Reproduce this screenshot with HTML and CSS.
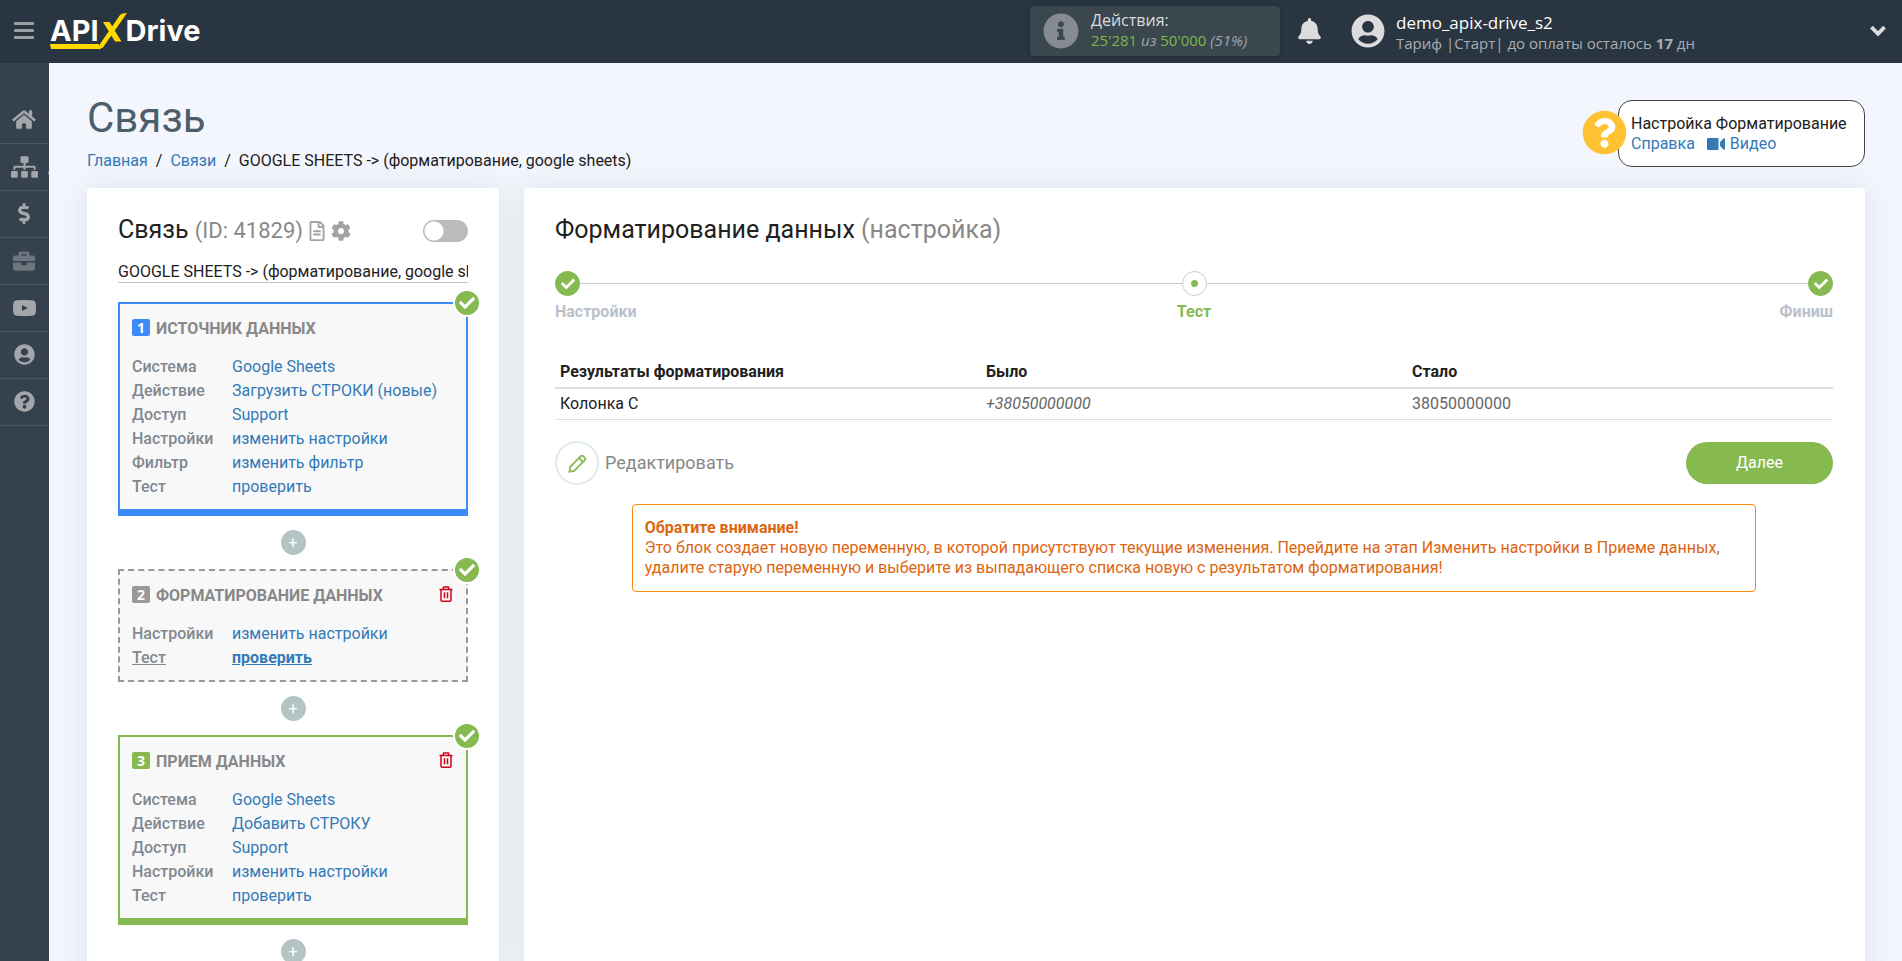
FILE: index.html
```html
<!DOCTYPE html>
<html lang="ru">
<head>
<meta charset="utf-8">
<title>APIXDrive – Связь</title>
<link rel="stylesheet" href="styles.css">
</head>
<body>
<svg class="sprite" aria-hidden="true">
  <symbol id="i-check" viewBox="0 0 512 512"><path d="M173.898 439.404l-166.4-166.4c-9.997-9.997-9.997-26.206 0-36.204l36.203-36.204c9.997-9.998 26.207-9.998 36.204 0L192 312.69 432.095 72.596c9.997-9.997 26.207-9.997 36.204 0l36.203 36.204c9.997 9.997 9.997 26.206 0 36.204l-294.4 294.401c-9.998 9.997-26.207 9.997-36.204-.001z"/></symbol>
  <symbol id="i-user" viewBox="0 0 496 512"><path d="M248 8C111 8 0 119 0 256s111 248 248 248 248-111 248-248S385 8 248 8zm0 96c48.6 0 88 39.4 88 88s-39.4 88-88 88-88-39.4-88-88 39.4-88 88-88zm0 344c-58.7 0-111.3-26.6-146.5-68.2 18.8-35.4 55.6-59.8 98.5-59.8 2.4 0 4.8.4 7.1 1.1 13 4.2 26.6 6.9 40.9 6.9 14.3 0 28-2.7 40.9-6.9 2.3-.7 4.7-1.1 7.1-1.1 42.9 0 79.7 24.4 98.5 59.8C359.3 421.4 306.7 448 248 448z"/></symbol>
  <symbol id="i-question" viewBox="0 0 512 512"><path d="M504 256c0 136.997-111.043 248-248 248S8 392.997 8 256C8 119.083 119.043 8 256 8s248 111.083 248 248zM262.655 90c-54.497 0-89.255 22.957-116.549 63.758-3.536 5.286-2.353 12.415 2.715 16.258l34.699 26.31c5.205 3.947 12.621 3.008 16.665-2.122 17.864-22.658 30.113-35.797 57.303-35.797 20.429 0 45.698 13.148 45.698 32.958 0 14.976-12.363 22.667-32.534 33.976C247.128 238.528 216 254.941 216 296v4c0 6.627 5.373 12 12 12h56c6.627 0 12-5.373 12-12v-1.333c0-28.462 83.186-29.647 83.186-106.667 0-58.002-60.165-102-116.531-102zM256 338c-25.365 0-46 20.635-46 46 0 25.364 20.635 46 46 46s46-20.636 46-46c0-25.365-20.635-46-46-46z"/></symbol>
  <symbol id="i-trash" viewBox="0 0 14 16"><path d="M0.500 3.500h13M4 3.500l.6-2.500h4.800l.6 2.500M2 3.500v10.500a1.200 1.200 0 0 0 1.200 1.200h7.600a1.200 1.200 0 0 0 1.200-1.200V3.500M5.500 6.200v6M8.500 6.200v6" fill="none" stroke="currentColor" stroke-width="1.500"/></symbol>
</svg>

<header class="topbar">
  <button class="burger" type="button" aria-label="Меню"><span></span><span></span><span></span></button>
  <a class="logo" href="#" aria-label="APIXDrive">
    <span>API</span>
    <svg class="logo-x" viewBox="0 0 28 36" aria-hidden="true"><path d="M4 9h6.500L22.500 28.500H16zM21 2Q23 0 28 0L4 34.500 1 35.500V31z"/></svg>
    <span>Drive</span>
    <svg class="logo-line" viewBox="0 0 51 5" aria-hidden="true"><path d="M0 0h49l2 5H1z"/></svg>
  </a>
  <div class="actions">
    <svg class="ic-info" viewBox="0 0 512 512" aria-hidden="true"><path d="M256 8C119.043 8 8 119.083 8 256c0 136.997 111.043 248 248 248s248-111.003 248-248C504 119.083 392.957 8 256 8zm0 110c23.196 0 42 18.804 42 42s-18.804 42-42 42-42-18.804-42-42 18.804-42 42-42zm56 254c0 6.627-5.373 12-12 12h-88c-6.627 0-12-5.373-12-12v-24c0-6.627 5.373-12 12-12h12v-64h-12c-6.627 0-12-5.373-12-12v-24c0-6.627 5.373-12 12-12h64c6.627 0 12 5.373 12 12v100h12c6.627 0 12 5.373 12 12v24z"/></svg>
    <div>
      <div class="actions-label">Действия:</div>
      <div class="actions-value"><b>25'281</b> <i>из</i> <b>50'000</b> <i>(51%)</i></div>
    </div>
  </div>
  <button class="bell" type="button" aria-label="Уведомления"><svg viewBox="0 0 448 512"><path d="M224 512c35.320 0 63.970-28.650 63.970-64H160.030c0 35.350 28.650 64 63.970 64zm215.390-149.710c-19.320-20.760-55.470-51.990-55.470-154.290 0-77.700-54.480-139.900-127.940-155.160V32c0-17.670-14.320-32-31.980-32s-31.980 14.330-31.980 32v20.840C118.560 68.100 64.080 130.300 64.080 208c0 102.300-36.150 133.530-55.470 154.290-6 6.450-8.660 14.160-8.610 21.710.11 16.400 12.980 32 32.100 32h383.800c19.120 0 32-15.600 32.100-32 .05-7.550-2.610-15.270-8.610-21.710z"/></svg></button>
  <div class="account">
    <svg class="ic-account" aria-hidden="true"><use href="#i-user"/></svg>
    <div>
      <div class="account-name">demo_apix-drive_s2</div>
      <div class="account-plan">Тариф |Старт| до оплаты осталось <b>17</b> дн</div>
    </div>
  </div>
  <button class="expand" type="button" aria-label="Развернуть"><svg viewBox="0 0 16 11"><path d="M2 2l6 6 6-6" fill="none" stroke="currentColor" stroke-width="3.500"/></svg></button>
</header>

<div class="shell">
  <nav class="rail" aria-label="Разделы">
    <a href="#" aria-label="Главная"><svg class="ic-24" viewBox="0 0 576 512"><path d="M280.370 148.260L96 300.110V464a16 16 0 0 0 16 16l112.060-.29a16 16 0 0 0 15.920-16V368a16 16 0 0 1 16-16h64a16 16 0 0 1 16 16v95.640a16 16 0 0 0 16 16.050L464 480a16 16 0 0 0 16-16V300L295.670 148.260a12.190 12.190 0 0 0-15.300 0zM571.600 251.470L488 182.560V44.050a12 12 0 0 0-12-12h-56a12 12 0 0 0-12 12v72.610L318.470 43a48 48 0 0 0-61 0L4.340 251.470a12 12 0 0 0-1.600 16.900l25.500 31A12 12 0 0 0 45.150 301l235.220-193.740a12.190 12.190 0 0 1 15.300 0L530.900 301a12 12 0 0 0 16.900-1.600l25.500-31a12 12 0 0 0-1.700-16.930z"/></svg></a>
    <a class="has-sub" href="#" aria-label="Связи"><svg class="ic-27" viewBox="0 0 640 512"><path d="M128 352H32c-17.670 0-32 14.330-32 32v96c0 17.670 14.330 32 32 32h96c17.670 0 32-14.330 32-32v-96c0-17.670-14.330-32-32-32zm-24-80h192v48h48v-48h192v48h48v-57.590c0-21.170-17.230-38.410-38.410-38.410H344v-64h40c17.670 0 32-14.330 32-32V32c0-17.670-14.330-32-32-32H256c-17.670 0-32 14.330-32 32v96c0 17.670 14.330 32 32 32h40v64H94.410C73.230 224 56 241.230 56 262.410V320h48v-48zm264 80h-96c-17.670 0-32 14.330-32 32v96c0 17.670 14.330 32 32 32h96c17.670 0 32-14.330 32-32v-96c0-17.670-14.330-32-32-32zm240 0h-96c-17.670 0-32 14.330-32 32v96c0 17.670 14.330 32 32 32h96c17.670 0 32-14.330 32-32v-96c0-17.670-14.330-32-32-32z"/></svg></a>
    <a href="#" aria-label="Оплата"><svg class="ic-12" viewBox="0 0 288 512"><path d="M209.200 233.400l-108-31.600C88.700 198.200 80 186.500 80 173.500c0-16.300 13.200-29.500 29.500-29.500h66.300c12.200 0 24.200 3.700 34.200 10.500 6.100 4.100 14.300 3.100 19.500-2l34.800-34c7.100-6.900 6.100-18.400-1.800-24.500C238 74.800 207.400 64.100 176 64V16c0-8.800-7.200-16-16-16h-32c-8.800 0-16 7.200-16 16v48h-2.500C45.800 64-5.400 118.700.5 183.600c4.200 46.100 39.400 83.600 83.800 96.600l102.500 30c12.500 3.700 21.200 15.300 21.200 28.300 0 16.300-13.200 29.500-29.500 29.500h-66.300C100 368 88 364.300 78 357.500c-6.100-4.100-14.300-3.100-19.500 2l-34.800 34c-7.100 6.900-6.100 18.400 1.800 24.500 24.500 19.200 55.100 29.900 86.500 30v48c0 8.800 7.200 16 16 16h32c8.800 0 16-7.200 16-16v-48.200c46.600-.9 90.300-28.600 105.700-72.700 21.500-61.600-14.600-124.800-72.500-141.700z"/></svg></a>
    <a class="dim" href="#" aria-label="Бизнес"><svg class="ic-22" viewBox="0 0 512 512"><path d="M320 336c0 8.840-7.160 16-16 16h-96c-8.840 0-16-7.160-16-16v-48H0v144c0 25.600 22.400 48 48 48h416c25.600 0 48-22.400 48-48V288H320v48zm144-208h-80V80c0-25.600-22.400-48-48-48H176c-25.600 0-48 22.400-48 48v48H48c-25.600 0-48 22.400-48 48v80h512v-80c0-25.600-22.400-48-48-48zm-144 0H192V96h128v32z"/></svg></a>
    <a href="#" aria-label="Видео"><svg class="ic-23" viewBox="0 0 23 16"><path fill-rule="evenodd" d="M4 .3Q11.500-.3 19 .3q3.500.2 3.800 3.700.4 4 0 8-.3 3.500-3.800 3.700-7.500.6-15 0Q.5 15.500.2 12q-.4-4 0-8Q.5.500 4 .3zM9 5v6l6-3z"/></svg></a>
    <a href="#" aria-label="Профиль"><svg class="ic-21"><use href="#i-user"/></svg></a>
    <a href="#" aria-label="Помощь"><svg class="ic-21"><use href="#i-question"/></svg></a>
  </nav>

  <main class="page">
    <div class="page-head">
      <div>
        <h1>Связь</h1>
        <nav class="crumbs" aria-label="Путь"><a href="#">Главная</a><span>/</span><a href="#">Связи</a><span>/</span>GOOGLE SHEETS -&gt; (форматирование, google sheets)</nav>
      </div>
      <aside class="help">
        <svg class="help-badge" aria-hidden="true"><use href="#i-question"/></svg>
        <div>Настройка Форматирование</div>
        <div class="help-links"><a href="#">Справка</a><a href="#"><svg class="ic-video" viewBox="0 0 18 12" aria-hidden="true"><path d="M1 0h10.500v12H1q-1 0-1-1V1q0-1 1-1zM13 4l3.500-3.500Q18 0 18 1v10q0 1-1.500.5L13 8z"/></svg> Видео</a></div>
      </aside>
    </div>

    <div class="columns">
      <section class="card flow">
        <div class="flow-head">
          <h2>Связь <span>(ID: 41829)</span></h2>
          <button class="icon-btn" type="button" aria-label="Журнал"><svg class="ic-doc" viewBox="0 0 384 512"><path d="M288 248v28c0 6.600-5.400 12-12 12H108c-6.600 0-12-5.400-12-12v-28c0-6.600 5.400-12 12-12h168c6.600 0 12 5.400 12 12zm-12 72H108c-6.600 0-12 5.400-12 12v28c0 6.600 5.400 12 12 12h168c6.600 0 12-5.400 12-12v-28c0-6.600-5.400-12-12-12zm108-188.100V464c0 26.500-21.500 48-48 48H48c-26.500 0-48-21.500-48-48V48C0 21.500 21.500 0 48 0h204.100C264.800 0 277 5.100 286 14.100L369.900 98c9 8.900 14.100 21.200 14.100 33.900zm-128-80V128h76.100L256 51.900zM336 464V176H232c-13.300 0-24-10.700-24-24V48H48v416h288z"/></svg></button>
          <button class="icon-btn" type="button" aria-label="Настройки связи"><svg class="ic-cog" viewBox="0 0 512 512"><path d="M487.400 315.700l-42.600-24.600c4.300-23.200 4.300-47 0-70.200l42.600-24.600c4.900-2.800 7.100-8.600 5.500-14-11.100-35.600-30-67.800-54.700-94.600-3.800-4.100-10-5.100-14.800-2.300L380.800 110c-17.900-15.400-38.500-27.300-60.800-35.100V25.800c0-5.600-3.900-10.500-9.400-11.700-36.700-8.200-74.300-7.800-109.200 0-5.500 1.200-9.400 6.100-9.400 11.700V75c-22.200 7.900-42.800 19.800-60.800 35.100L88.700 85.500c-4.900-2.800-11-1.900-14.800 2.300-24.700 26.700-43.600 58.900-54.700 94.600-1.700 5.400.6 11.200 5.500 14L67.300 221c-4.300 23.200-4.300 47 0 70.200l-42.600 24.600c-4.900 2.800-7.100 8.600-5.500 14 11.100 35.600 30 67.800 54.700 94.600 3.800 4.100 10 5.100 14.800 2.300l42.600-24.600c17.900 15.400 38.500 27.300 60.800 35.100v49.200c0 5.600 3.900 10.500 9.400 11.700 36.700 8.200 74.300 7.800 109.200 0 5.500-1.200 9.400-6.100 9.400-11.700v-49.200c22.200-7.900 42.800-19.800 60.800-35.100l42.600 24.600c4.900 2.800 11 1.900 14.800-2.300 24.700-26.700 43.600-58.900 54.700-94.600 1.500-5.500-.7-11.300-5.600-14.100zM256 336c-44.100 0-80-35.900-80-80s35.900-80 80-80 80 35.900 80 80-35.900 80-80 80z"/></svg></button>
          <input class="switch" type="checkbox" role="switch" aria-label="Включить связь">
        </div>
        <input class="flow-name" type="text" aria-label="Название связи" value="GOOGLE SHEETS -&gt; (форматирование, google sheets)">

        <article class="block source">
          <span class="done"><svg><use href="#i-check"/></svg></span>
          <header><span class="num">1</span><h3>ИСТОЧНИК ДАННЫХ</h3></header>
          <dl>
            <dt>Система</dt><dd><a href="#">Google Sheets</a></dd>
            <dt>Действие</dt><dd><a href="#">Загрузить СТРОКИ (новые)</a></dd>
            <dt>Доступ</dt><dd><a href="#">Support</a></dd>
            <dt>Настройки</dt><dd><a href="#">изменить настройки</a></dd>
            <dt>Фильтр</dt><dd><a href="#">изменить фильтр</a></dd>
            <dt>Тест</dt><dd><a href="#">проверить</a></dd>
          </dl>
        </article>
        <button class="add" type="button" aria-label="Добавить блок">+</button>
        <article class="block format">
          <span class="done"><svg><use href="#i-check"/></svg></span>
          <header><span class="num">2</span><h3>ФОРМАТИРОВАНИЕ ДАННЫХ</h3><button class="trash" type="button" aria-label="Удалить"><svg><use href="#i-trash"/></svg></button></header>
          <dl>
            <dt>Настройки</dt><dd><a href="#">изменить настройки</a></dd>
            <dt class="current">Тест</dt><dd class="current"><a href="#">проверить</a></dd>
          </dl>
        </article>
        <button class="add" type="button" aria-label="Добавить блок">+</button>
        <article class="block target">
          <span class="done"><svg><use href="#i-check"/></svg></span>
          <header><span class="num">3</span><h3>ПРИЕМ ДАННЫХ</h3><button class="trash" type="button" aria-label="Удалить"><svg><use href="#i-trash"/></svg></button></header>
          <dl>
            <dt>Система</dt><dd><a href="#">Google Sheets</a></dd>
            <dt>Действие</dt><dd><a href="#">Добавить СТРОКУ</a></dd>
            <dt>Доступ</dt><dd><a href="#">Support</a></dd>
            <dt>Настройки</dt><dd><a href="#">изменить настройки</a></dd>
            <dt>Тест</dt><dd><a href="#">проверить</a></dd>
          </dl>
        </article>
        <button class="add" type="button" aria-label="Добавить блок">+</button>
      </section>

      <section class="card detail">
        <h2>Форматирование данных <span>(настройка)</span></h2>
        <ol class="steps">
          <li><span class="dot full"><svg><use href="#i-check"/></svg></span>Настройки</li>
          <li class="active"><span class="dot"></span>Тест</li>
          <li><span class="dot full"><svg><use href="#i-check"/></svg></span>Финиш</li>
        </ol>
        <table class="results">
          <thead><tr><th>Результаты форматирования</th><th>Было</th><th>Стало</th></tr></thead>
          <tbody><tr><td>Колонка C</td><td class="was">+38050000000</td><td class="now">38050000000</td></tr></tbody>
        </table>
        <div class="buttons">
          <button class="edit" type="button"><span class="edit-ring"><svg viewBox="0 0 20 20" aria-hidden="true"><path d="M1.500 18.500l.8-5L13.500 2.300q1.200-1.200 2.400 0l1.800 1.800q1.200 1.200 0 2.400L6.500 17.700zM11.600 4.200l4.200 4.200" fill="none" stroke="currentColor" stroke-width="1.900"/></svg></span>Редактировать</button>
          <button class="next" type="button">Далее</button>
        </div>
        <div class="notice"><b>Обратите внимание!</b><br>Это блок создает новую переменную, в которой присутствуют текущие изменения. Перейдите на этап Изменить настройки в Приеме данных, удалите старую переменную и выберите из выпадающего списка новую с результатом форматирования!</div>
      </section>
    </div>
  </main>
</div>
</body>
</html>
```
FILE: styles.css
```css
* { box-sizing: border-box; }
body {
  margin: 0;
  min-height: 100vh;
  display: flex;
  flex-direction: column;
  background: #f3f6fc;
  color: #212121;
  font: 16px/20px Roboto, "Noto Sans", sans-serif;
}
button { padding: 0; border: 0; background: none; color: inherit; font: inherit; cursor: pointer; }
a { color: #337ab7; text-decoration: none; }
h1, h2, h3, dl, dd, ol { margin: 0; padding: 0; font-weight: 400; }
svg { display: block; fill: currentColor; }
.sprite { position: absolute; width: 0; height: 0; }

/* Top bar */
.topbar {
  flex: none;
  display: flex;
  align-items: center;
  height: 63px;
  padding: 0 15px 2px 14px;
  background: #2a3542;
  color: #dcdcdc;
  font-family: "Open Sans", "Noto Sans", sans-serif;
}
.burger { display: flex; flex-direction: column; gap: 3px; width: 20px; margin-right: 16px; }
.burger span { height: 3px; border-radius: 1px; background: #9a9fa4; }
.burger span + span { margin-top: 1px; }
.logo {
  position: relative;
  display: flex;
  align-items: center;
  height: 36px;
  margin-right: auto;
  color: #fff;
  font: 700 29px/34px Inter, "Open Sans", sans-serif;
}
.logo svg { fill: #ffd900; }
.logo-x { width: 28px; height: 36px; margin-right: -1px; }
.logo-line { position: absolute; left: 0; bottom: 0; width: 51px; height: 5px; }
.actions {
  display: flex;
  align-items: center;
  gap: 12px;
  width: 250px;
  height: 50px;
  margin-right: 18px;
  padding: 0 13px;
  border-radius: 4px;
  background: #3a474f;
  box-shadow: 0 0 4px rgba(0, 0, 0, .2);
}
.actions > div { padding-bottom: 2px; }
.ic-info { width: 36px; height: 36px; color: #868b91; }
.actions-value { font-size: 15px; }
.actions-value b { color: #7cb84a; font-weight: 400; }
.actions-value i { color: #a0a5aa; }
.bell { margin-right: 30px; }
.bell svg { width: 23px; height: 26px; }
.account { display: flex; align-items: center; gap: 11px; width: 518px; }
.account > div { padding-top: 4px; }
.ic-account { width: 34px; height: 34px; }
.account-name { color: #fff; font-size: 17px; }
.account-plan { color: #a9aeb3; font-size: 15px; }
.expand svg { width: 18px; height: 12px; }

/* Left rail */
.shell { flex: 1; display: flex; }
.rail {
  flex: none;
  width: 49px;
  padding-top: 34px;
  background: #36414e;
  color: #a3a7ab;
}
.rail a {
  position: relative;
  display: flex;
  align-items: center;
  justify-content: center;
  height: 47px;
  padding: 0 1px 1px 0;
  border-bottom: 1px solid #4b5662;
  color: inherit;
}
.rail .dim { color: #6d757e; }
.rail .has-sub::after {
  content: "";
  position: absolute;
  right: 0;
  bottom: 15px;
  width: 1px;
  height: 4px;
  background: #6d757e;
}
.ic-12 { width: 12px; height: 21px; }
.ic-21 { width: 21px; height: 21px; }
.ic-22 { width: 22px; height: 22px; }
.ic-23 { width: 23px; height: 16px; }
.ic-24 { width: 24px; height: 21px; }
.ic-27 { width: 27px; height: 22px; }

/* Page */
.page { flex: 1; display: flex; flex-direction: column; min-width: 0; padding: 37px 37px 0 38px; }
.page-head { display: flex; align-items: flex-start; justify-content: space-between; height: 88px; }
h1 { color: #4d5e6b; font-size: 42px; line-height: 36px; }
.crumbs { margin-top: 15px; }
.crumbs span { margin: 0 8px; }
.help {
  position: relative;
  width: 247px;
  padding: 13px 0 12px 12px;
  border: 1px solid #444;
  border-radius: 14px;
  background: #fff;
}
.help-badge {
  position: absolute;
  left: -37px;
  top: 9px;
  width: 45px;
  height: 45px;
  border-radius: 50%;
  background: radial-gradient(#fff 60%, transparent 62%);
  color: #ffc233;
}
.help-links { display: flex; gap: 12px; }
.help-links a { display: flex; align-items: center; gap: 5px; }
.ic-video { width: 18px; height: 12px; }

.columns { flex: 1; display: flex; align-items: stretch; gap: 25px; }
.card {
  border-radius: 4px;
  background: #fff;
  box-shadow: 0 0 30px rgba(60, 80, 100, .12);
  padding: 28px 32px 0 31px;
}
h2 { font-size: 25px; line-height: 28px; }
h2 span { color: #888; }

/* Flow column */
.flow { flex: none; width: 412px; padding-right: 31px; }
.flow h2 span { font-size: 22px; }
.flow-head { display: flex; align-items: center; }
.icon-btn { margin-left: 6px; color: #a3a3a3; }
.ic-doc { width: 16px; height: 20px; }
.ic-cog { width: 20px; height: 20px; }
.switch {
  appearance: none;
  width: 45px;
  height: 22px;
  margin: 0 0 0 auto;
  border-radius: 11px;
  background: radial-gradient(circle at 11px 11px, #fff 9px, transparent 10px) #bbb;
}
.flow-name {
  display: block;
  width: 100%;
  height: 22px;
  margin: 16px 0 19px;
  padding: 0;
  border: 0;
  border-bottom: 1px solid #c4c4c4;
  background: none;
  color: #212121;
  font: inherit;
  line-height: 20px;
}
.block {
  position: relative;
  padding: 15px 13px 10px 12px;
  border: 2px solid;
  background: #f8f8f8;
}
.block.source { border-color: #3d8bf8; border-bottom-width: 7px; }
.block.format { border: 2px dashed #999; }
.block.target { border-color: #86b94f; border-bottom-width: 7px; }
.block header { display: flex; align-items: flex-start; height: 20px; margin-bottom: 16px; }
.num {
  width: 18px;
  height: 17px;
  margin-right: 6px;
  border-radius: 2px;
  color: #fff;
  font: 700 14px/17px "Open Sans", "Noto Sans", sans-serif;
  text-align: center;
}
.source .num { background: #3d8bf8; }
.format .num { background: #999; }
.target .num { background: #86b94f; }
h3 { color: #888; font-size: 16px; font-weight: 700; }
.trash { margin-left: auto; color: #d0021b; }
.trash svg { width: 14px; height: 16px; }
dl { display: grid; grid-template-columns: 100px 1fr; line-height: 24px; }
dt { color: #808891; font-weight: 500; }
dt.current { text-decoration: underline; }
dd.current a { font-weight: 700; text-decoration: underline; }
.done {
  position: absolute;
  right: -15px;
  top: -15px;
  display: grid;
  place-items: center;
  width: 28px;
  height: 28px;
  border: 2px solid #fff;
  border-radius: 50%;
  background: #86b94f;
  color: #fff;
}
.done svg { width: 16px; height: 16px; }
.add {
  display: block;
  width: 25px;
  height: 25px;
  margin: 14px auto;
  border-radius: 50%;
  background: #b4c3c3;
  color: #fff;
  font-size: 16px;
  line-height: 24px;
}

/* Detail column */
.detail { flex: 1; min-width: 0; }
.steps {
  display: flex;
  justify-content: space-between;
  margin: 27px 0 35px;
  background: linear-gradient(#ccc, #ccc) 0 12px / 100% 1px no-repeat;
  list-style: none;
  color: #bac1ca;
  font-weight: 700;
}
.steps li { flex: 1; display: flex; flex-direction: column; align-items: flex-start; gap: 6px; }
.steps li.active { align-items: center; color: #86b94f; }
.steps li:last-child { align-items: flex-end; }
.dot {
  display: grid;
  place-items: center;
  width: 25px;
  height: 25px;
  border: 1px solid #ccc;
  border-radius: 50%;
  background: radial-gradient(#86b94f 3px, #fff 4px);
}
.dot.full { border-color: #86b94f; background: #86b94f; color: #fff; }
.dot svg { width: 14px; height: 14px; }
.results { width: 100%; table-layout: fixed; border-collapse: collapse; }
.results th, .results td { padding: 5px; text-align: left; font-weight: 400; }
.results th { border-bottom: 2px solid #dedfe0; font-weight: 700; }
.results td { border-bottom: 1px solid #dedfe0; }
.results .was { color: #666; font-style: italic; }
.results .now { color: #666; }
.buttons { display: flex; align-items: center; justify-content: space-between; margin-top: 21px; }
.edit { display: flex; align-items: center; gap: 6px; color: #888; font-size: 18px; }
.edit-ring {
  display: grid;
  place-items: center;
  width: 44px;
  height: 44px;
  border: 2px solid #e0eae8;
  border-radius: 50%;
  color: #86b94f;
}
.edit-ring svg { width: 19px; height: 19px; }
.next { width: 147px; height: 42px; border-radius: 21px; background: #86b94f; color: #fff; }
.notice {
  margin: 19px 6% 0;
  padding: 13px 12px;
  border: 1px solid #f88b14;
  border-radius: 4px;
  color: #dd6510;
}
```
